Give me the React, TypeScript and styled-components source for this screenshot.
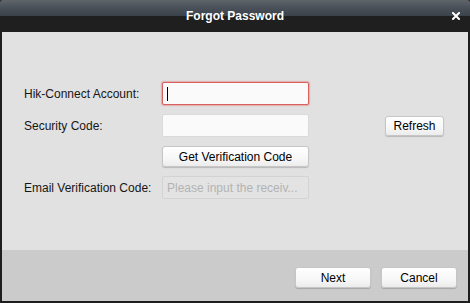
import React from 'react';
import styled, { createGlobalStyle } from 'styled-components';

const GlobalStyle = createGlobalStyle`
    html, body {
        margin: 0;
        padding: 0;
        background: #2a2a2a;
    }
    body {
        font-family: "Liberation Sans", Arial, sans-serif;
    }
`;

const StyledWindow = styled.div`
    width: 470px;
    height: 303px;
    display: flex;
    flex-direction: column;
    background-color: #1e1e1e;
    border-radius: 3px 3px 0 0;
    overflow: hidden;
    box-sizing: border-box;
`;

const StyledTitleBar = styled.header`
    height: 32px;
    flex-shrink: 0;
    display: flex;
    align-items: center;
    justify-content: center;
    position: relative;
    background: linear-gradient(to bottom, #60656b 0%, #4a5058 25%, #3a424b 50%, #1f1f1f 50%, #1f1f1f 100%);
`;

const StyledTitle = styled.h1`
    margin: 0;
    font-size: 12px;
    font-weight: bold;
    color: white;
`;

const StyledClose = styled.span`
    position: absolute;
    right: 10px;
    top: 12px;
    width: 8px;
    height: 8px;
    display: flex;
`;

const StyledFrame = styled.div`
    flex: 1;
    display: flex;
    flex-direction: column;
    margin: 0 2px 2px 2px;
`;

const StyledBody = styled.main`
    height: 218px;
    box-sizing: border-box;
    padding: 50px 0 0 22px;
    background-color: #e1e1e1;
`;

const StyledForm = styled.div`
    display: grid;
    grid-template-columns: 138px 147px 76px 59px;
    grid-template-rows: 23px 23px 21px 23px;
    row-gap: 9px;
    align-items: center;
`;

const StyledLabel = styled.label`
    font-size: 12px;
    color: #161616;
    grid-column: 1;
`;

const StyledField = styled.div<{ $focused?: boolean; $disabled?: boolean }>`
    grid-column: 2;
    height: 23px;
    box-sizing: border-box;
    display: flex;
    align-items: center;
    padding-left: 4px;
    border-radius: 2px;
    font-size: 12px;
    color: #b3b3b3;
    white-space: nowrap;
    overflow: hidden;
    background-color: ${props => props.$disabled ? '#e3e3e3' : '#fafafa'};
    border: 1px solid ${props => props.$focused ? '#d9605e' : props.$disabled ? '#d3d3d3' : '#dadada'};
    box-shadow: ${props => props.$focused ? '0 0 1px 1px rgba(230, 120, 120, 0.5)' : 'none'};
`;

const StyledCaret = styled.span`
    width: 1px;
    height: 14px;
    background-color: #000;
`;

const StyledButton = styled.button<{ $width: number; $column?: number }>`
    width: ${props => props.$width}px;
    height: 21px;
    padding: 0;
    box-sizing: border-box;
    grid-column: ${props => props.$column ?? 'auto'};
    font-family: "Liberation Sans", Arial, sans-serif;
    font-size: 12px;
    color: #000;
    background: linear-gradient(to bottom, #ffffff 0%, #f7f7f7 60%, #ececec 100%);
    border: 1px solid #c6c6c6;
    border-radius: 3px;
    box-shadow: 0 1px 1px rgba(0, 0, 0, 0.18);
`;

const StyledRefreshButton = styled(StyledButton)`
    grid-row: 2;
    height: 20px;
`;

const StyledFooter = styled.footer`
    flex: 1;
    display: flex;
    justify-content: flex-end;
    align-items: flex-start;
    gap: 10px;
    padding: 17px 11px 0 0;
    background-color: #cbcbcb;
`;

const CloseIcon = () => (
    <svg width="8" height="8" viewBox="0 0 8 8">
        <path d="M1 1 L7 7 M7 1 L1 7" stroke="#ffffff" strokeWidth="2" strokeLinecap="square" />
    </svg>
);

export default function App() {
    return (
        <StyledWindow>
            <GlobalStyle />
            <StyledTitleBar>
                <StyledTitle>Forgot Password</StyledTitle>
                <StyledClose><CloseIcon /></StyledClose>
            </StyledTitleBar>
            <StyledFrame>
                <StyledBody>
                    <StyledForm>
                        <StyledLabel>Hik-Connect Account:</StyledLabel>
                        <StyledField $focused><StyledCaret /></StyledField>

                        <StyledLabel>Security Code:</StyledLabel>
                        <StyledField />
                        <StyledRefreshButton $width={59} $column={4}>Refresh</StyledRefreshButton>

                        <StyledButton $width={147} $column={2}>Get Verification Code</StyledButton>

                        <StyledLabel>Email Verification Code:</StyledLabel>
                        <StyledField $disabled>Please input the receiv...</StyledField>
                    </StyledForm>
                </StyledBody>
                <StyledFooter>
                    <StyledButton $width={76}>Next</StyledButton>
                    <StyledButton $width={76}>Cancel</StyledButton>
                </StyledFooter>
            </StyledFrame>
        </StyledWindow>
    );
}
